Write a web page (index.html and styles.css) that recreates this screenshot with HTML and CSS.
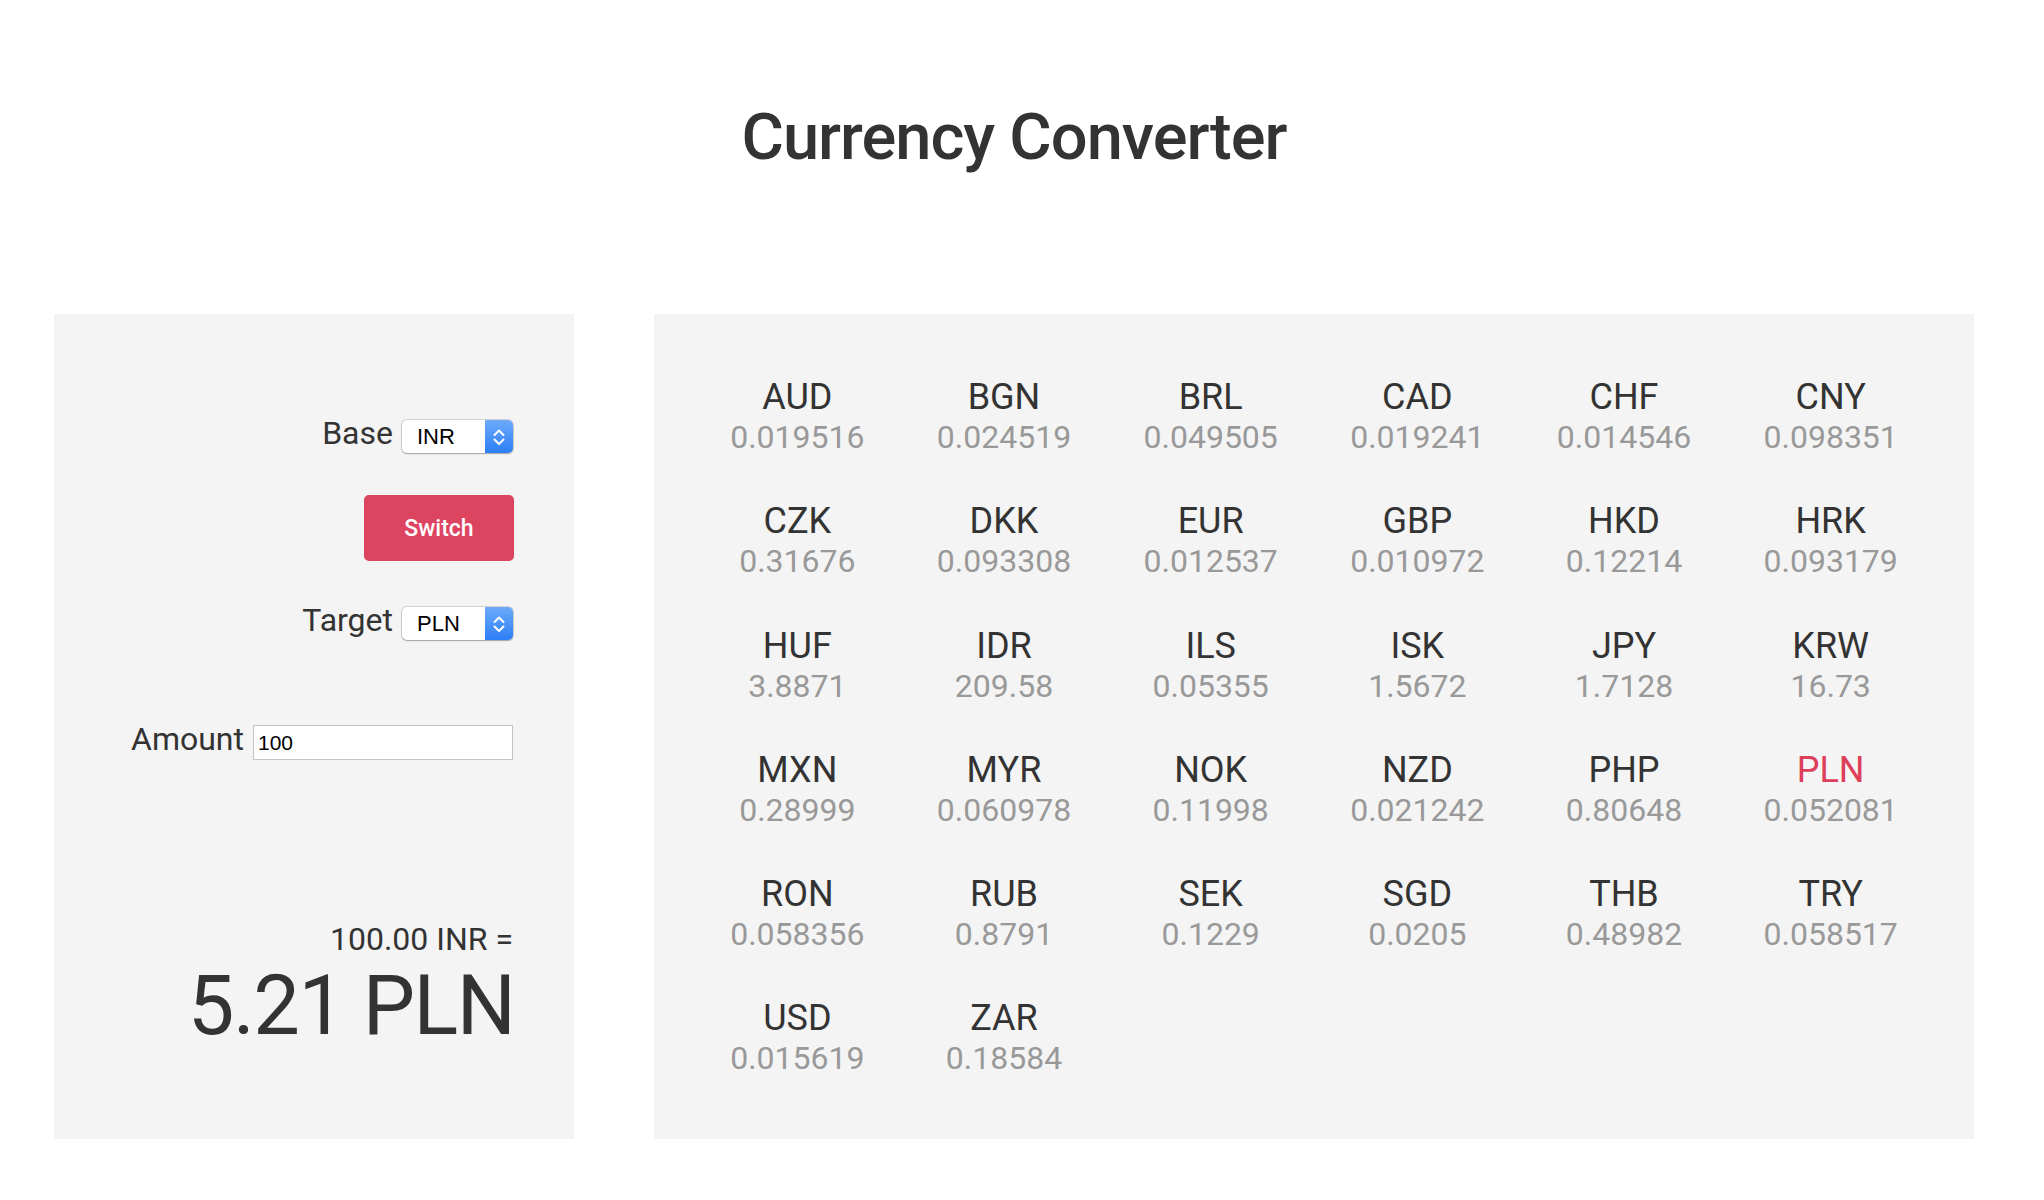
FILE: index.html
```html
<!DOCTYPE html>
<html lang="en">
<head>
<meta charset="utf-8">
<title>Currency Converter</title>
<link rel="stylesheet" href="styles.css">
</head>
<body>
<h1 class="title">Currency Converter</h1>
<main class="layout">
  <section class="panel controls">
    <div class="field field-base">
      <span class="lbl">Base</span>
      <div class="select"><span class="sel-text">INR</span><span class="sel-btn"><svg width="28" height="33" viewBox="0 0 28 33"><path d="M9.5 15 L14 10.5 L18.5 15 M9.5 19.5 L14 24 L18.5 19.5" fill="none" stroke="#fff" stroke-width="2" stroke-linecap="round" stroke-linejoin="round"/></svg></span></div>
    </div>
    <button class="switch">Switch</button>
    <div class="field field-target">
      <span class="lbl">Target</span>
      <div class="select"><span class="sel-text">PLN</span><span class="sel-btn"><svg width="28" height="33" viewBox="0 0 28 33"><path d="M9.5 15 L14 10.5 L18.5 15 M9.5 19.5 L14 24 L18.5 19.5" fill="none" stroke="#fff" stroke-width="2" stroke-linecap="round" stroke-linejoin="round"/></svg></span></div>
    </div>
    <div class="field field-amount">
      <span class="lbl">Amount</span>
      <input class="amount" type="text" value="100">
    </div>
    <div class="result">
      <div class="result-from">100.00 INR =</div>
      <div class="result-to">5.21 PLN</div>
    </div>
  </section>
  <section class="panel rates">
    <div class="rate"><div class="code">AUD</div><div class="val">0.019516</div></div>
    <div class="rate"><div class="code">BGN</div><div class="val">0.024519</div></div>
    <div class="rate"><div class="code">BRL</div><div class="val">0.049505</div></div>
    <div class="rate"><div class="code">CAD</div><div class="val">0.019241</div></div>
    <div class="rate"><div class="code">CHF</div><div class="val">0.014546</div></div>
    <div class="rate"><div class="code">CNY</div><div class="val">0.098351</div></div>
    <div class="rate"><div class="code">CZK</div><div class="val">0.31676</div></div>
    <div class="rate"><div class="code">DKK</div><div class="val">0.093308</div></div>
    <div class="rate"><div class="code">EUR</div><div class="val">0.012537</div></div>
    <div class="rate"><div class="code">GBP</div><div class="val">0.010972</div></div>
    <div class="rate"><div class="code">HKD</div><div class="val">0.12214</div></div>
    <div class="rate"><div class="code">HRK</div><div class="val">0.093179</div></div>
    <div class="rate"><div class="code">HUF</div><div class="val">3.8871</div></div>
    <div class="rate"><div class="code">IDR</div><div class="val">209.58</div></div>
    <div class="rate"><div class="code">ILS</div><div class="val">0.05355</div></div>
    <div class="rate"><div class="code">ISK</div><div class="val">1.5672</div></div>
    <div class="rate"><div class="code">JPY</div><div class="val">1.7128</div></div>
    <div class="rate"><div class="code">KRW</div><div class="val">16.73</div></div>
    <div class="rate"><div class="code">MXN</div><div class="val">0.28999</div></div>
    <div class="rate"><div class="code">MYR</div><div class="val">0.060978</div></div>
    <div class="rate"><div class="code">NOK</div><div class="val">0.11998</div></div>
    <div class="rate"><div class="code">NZD</div><div class="val">0.021242</div></div>
    <div class="rate"><div class="code">PHP</div><div class="val">0.80648</div></div>
    <div class="rate active"><div class="code">PLN</div><div class="val">0.052081</div></div>
    <div class="rate"><div class="code">RON</div><div class="val">0.058356</div></div>
    <div class="rate"><div class="code">RUB</div><div class="val">0.8791</div></div>
    <div class="rate"><div class="code">SEK</div><div class="val">0.1229</div></div>
    <div class="rate"><div class="code">SGD</div><div class="val">0.0205</div></div>
    <div class="rate"><div class="code">THB</div><div class="val">0.48982</div></div>
    <div class="rate"><div class="code">TRY</div><div class="val">0.058517</div></div>
    <div class="rate"><div class="code">USD</div><div class="val">0.015619</div></div>
    <div class="rate"><div class="code">ZAR</div><div class="val">0.18584</div></div>
  </section>
</main>
</body>
</html>
```

FILE: styles.css
```css
* { box-sizing: border-box; }

body {
  margin: 0;
  background: #fff;
  color: #333;
  font-family: Roboto, "Liberation Sans", Arial, sans-serif;
}

.title {
  margin: 100px 0 139px;
  padding-right: 16px;
  text-align: center;
  font-size: 65px;
  font-weight: 500;
  letter-spacing: -1px;
  line-height: 75px;
  color: #333;
}

.layout {
  display: flex;
  align-items: stretch;
  gap: 80px;
  padding-left: 54px;
}

.panel {
  background: #f4f4f4;
}

/* left controls */
.controls {
  width: 520px;
  padding: 100px 61px 0 0;
  display: flex;
  flex-direction: column;
  align-items: flex-end;
}

.field {
  display: flex;
  align-items: baseline;
}

.lbl {
  font-size: 32px;
  color: #333;
  margin-right: 9px;
}

.select {
  display: inline-flex;
  width: 111px;
  height: 33px;
  background: #fff;
  border-radius: 5px;
  box-shadow: 0 0 0 1px rgba(0, 0, 0, 0.14), 0 1px 1.5px rgba(0, 0, 0, 0.22);
  overflow: hidden;
}

.sel-text {
  flex: 1;
  padding-left: 15px;
  font-family: "Liberation Sans", Arial, sans-serif;
  font-size: 22px;
  line-height: 33px;
  color: #000;
}

.sel-btn {
  width: 28px;
  height: 33px;
  background: linear-gradient(#6daafa, #2c7ff6);
  display: flex;
}

.switch {
  margin-top: 42px;
  margin-right: -1px;
  width: 150px;
  height: 66px;
  border: 0;
  border-radius: 5px;
  background: #dd445f;
  color: #fff;
  font-family: Roboto, "Liberation Sans", sans-serif;
  font-size: 23px;
  font-weight: 500;
  padding: 0;
}

.field-target {
  margin-top: 40px;
}

.field-amount {
  margin-top: 80px;
}

.amount {
  width: 260px;
  height: 35px;
  border: 1px solid #c4c4c4;
  background: #fff;
  padding: 2px 4px 0;
  font-family: "Liberation Sans", Arial, sans-serif;
  font-size: 21px;
  color: #000;
  outline: none;
}

.result {
  margin-top: 160px;
  text-align: right;
}

.result-from {
  font-size: 32px;
  color: #333;
}

.result-to {
  font-size: 83px;
  letter-spacing: -1.5px;
  margin-right: -1.5px;
  line-height: 96px;
  color: #333;
}

/* right rates grid */
.rates {
  width: 1320px;
  padding: 62px 40px;
  display: grid;
  grid-template-columns: repeat(6, 1fr);
  row-gap: 44.3px;
  align-content: start;
}

.rate {
  text-align: center;
}

.code {
  font-size: 36px;
  color: #333;
}

.val {
  font-size: 32px;
  color: #999;
}

.rate.active .code {
  color: #dd3e5a;
}
```
